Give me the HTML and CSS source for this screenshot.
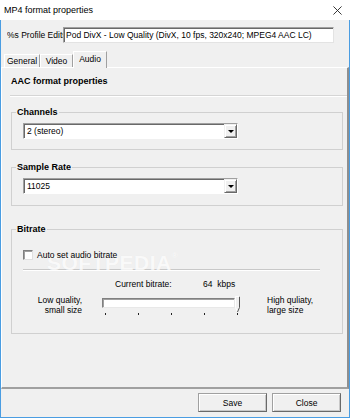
FILE: index.html
```html
<!DOCTYPE html>
<html>
<head>
<meta charset="utf-8">
<link rel="stylesheet" href="styles.css">
</head>
<body>
<div class="window">
  <div class="titlebar">
    <span class="title">MP4 format properties</span>
    <svg class="close" width="10" height="10" viewBox="0 0 10 10"><path d="M0.5 0.5L9.5 9.5M9.5 0.5L0.5 9.5" stroke="#222" stroke-width="1" fill="none"/></svg>
  </div>
  <div class="frame">
    <div class="profile">
      <span class="profile-label">%s Profile Edits</span>
      <div class="edit">Pod DivX - Low Quality (DivX, 10 fps, 320x240; MPEG4 AAC LC)</div>
    </div>
    <div class="tabs">
      <div class="tab tab-general">General</div>
      <div class="tab tab-video">Video</div>
      <div class="tab tab-active">Audio</div>
    </div>
    <div class="panel">
      <div class="heading">AAC format properties</div>
      <div class="rule"></div>

      <fieldset class="group group-channels">
        <legend>Channels</legend>
        <div class="group-body">
          <div class="combo"><span class="combo-text">2 (stereo)</span><span class="drop"><span class="arrow"></span></span></div>
        </div>
      </fieldset>

      <fieldset class="group group-rate">
        <legend>Sample Rate</legend>
        <div class="group-body">
          <div class="combo"><span class="combo-text">11025</span><span class="drop"><span class="arrow"></span></span></div>
        </div>
      </fieldset>

      <fieldset class="group group-bitrate">
        <legend>Bitrate</legend>
        <div class="group-body">
          <div class="watermark">SOFTPEDIA<sup>®</sup></div>
          <div class="check-row"><span class="checkbox"></span><span class="check-label">Auto set audio bitrate</span></div>
          <div class="inner-rule"></div>
          <div class="current-row"><span class="current-label">Current bitrate:</span><span>64&nbsp; kbps</span></div>
          <div class="slider-row">
            <div class="side-label side-left">Low quality,<br>small size</div>
            <div class="slider">
              <div class="track"></div>
              <svg class="thumb" width="7" height="17" viewBox="0 0 7 17"><path d="M1.5 0.5V11.5L3.5 16" stroke="#fff" fill="none"/><path d="M5.5 0.5V11.5L3.5 16" stroke="#555" fill="none"/><path d="M1.5 0.5H5.5" stroke="#fff"/></svg>
              <div class="ticks"><span></span><span></span><span></span><span></span><span></span></div>
            </div>
            <div class="side-label side-right">High quliaty,<br>large size</div>
          </div>
        </div>
      </fieldset>
    </div>
    <div class="footer">
      <button class="btn">Save</button>
      <button class="btn">Close</button>
    </div>
  </div>
</div>
</body>
</html>
```

FILE: styles.css
```css
* { box-sizing: border-box; }
html, body { margin: 0; padding: 0; }
body {
  width: 350px;
  height: 418px;
  background: #f0f0f0;
  font-family: "Liberation Sans", Arial, sans-serif;
  font-size: 8.5px;
  color: #000;
  overflow: hidden;
}
.window {
  width: 350px;
  height: 418px;
  display: flex;
  flex-direction: column;
}
.titlebar {
  height: 20px;
  background: #fff;
  display: flex;
  align-items: center;
  justify-content: space-between;
  padding: 0 8px 0 4px;
}
.title { font-size: 9px; }
.close { display: block; width: 9px; height: 9px; }

.frame {
  flex: 1;
  display: flex;
  flex-direction: column;
  border-left: 1px solid #4a9de2;
  border-right: 1px solid #4a9de2;
  border-bottom: 1px solid #4a9de2;
  min-height: 0;
}

.profile {
  height: 27px;
  display: flex;
  align-items: flex-start;
  padding: 7px 0 0 6px;
}
.profile-label {
  width: 56px;
  overflow: hidden;
  white-space: nowrap;
  line-height: 17px;
}
.edit {
  width: 271px;
  height: 16px;
  background: #fff;
  border: 1px solid;
  border-color: #a0a0a0 #e3e3e3 #e3e3e3 #a0a0a0;
  box-shadow: inset 1px 1px 0 #696969;
  padding-left: 2px;
  line-height: 14px;
  white-space: nowrap;
  overflow: hidden;
}

.tabs {
  height: 20px;
  display: flex;
  align-items: flex-end;
  padding-left: 3px;
}
.tab {
  height: 13px;
  line-height: 13px;
  text-align: center;
  border-top: 1px solid #fff;
  border-left: 1px solid #fff;
  border-right: 1px solid #a0a0a0;
  background: #f0f0f0;
}
.tab-general { width: 36px; }
.tab-video { width: 33px; }
.tab-active {
  width: 34px;
  height: 17px;
  line-height: 15px;
  margin-bottom: -1px;
  position: relative;
  z-index: 1;
}

.panel {
  flex: 1;
  border-top: 1px solid #fff;
  border-left: 1px solid #fff;
  border-right: 2px solid #8f8f8f;
  border-bottom: 2px solid #a0a0a0;
  padding: 7px 0 0 9px;
  min-height: 0;
}
.heading {
  font-weight: bold;
  font-size: 9px;
  line-height: 12px;
  height: 12px;
}
.rule {
  margin: 8px 0 0 -1px;
  height: 2px;
  border-top: 1px solid #d5d5d5;
  border-bottom: 1px solid #fff;
}

.group {
  margin: 9px 4px 0 0;
  padding: 0 0 10px 0;
  border: 1px solid #d0d0d0;
  min-width: 0;
  position: relative;
}
.group legend {
  padding: 0 1px;
  margin-left: 4px;
  font-weight: bold;
  font-size: 9px;
  line-height: 12px;
}
.group-rate { margin-top: 11px; padding-bottom: 11px; }
.group-bitrate { margin-top: 17px; padding-bottom: 18px; }
.group-body { padding-left: 11px; position: relative; }

.combo {
  margin-top: 5px;
  width: 215px;
  height: 16px;
  display: flex;
  background: #fff;
  border: 1px solid;
  border-color: #a0a0a0 #fff #fff #a0a0a0;
  box-shadow: inset 1px 1px 0 #696969;
}
.combo-text {
  flex: 1;
  padding-left: 3px;
  line-height: 14px;
}
.drop {
  width: 13px;
  height: 14px;
  background: #f0f0f0;
  border: 1px solid;
  border-color: #f0f0f0 #696969 #696969 #f0f0f0;
  box-shadow: inset 1px 1px 0 #fff, inset -1px -1px 0 #a0a0a0;
  display: flex;
  align-items: center;
  justify-content: center;
}
.arrow {
  width: 0;
  height: 0;
  border-left: 3px solid transparent;
  border-right: 3px solid transparent;
  border-top: 3px solid #000;
  margin-top: 1px;
}

.check-row {
  margin-top: 14px;
  height: 12px;
  display: flex;
  align-items: center;
  gap: 4px;
  position: relative;
}
.check-label { position: relative; }
.checkbox {
  width: 10px;
  height: 10px;
  background: #fff;
  border: 1px solid;
  border-color: #808080 #e0e0e0 #e0e0e0 #808080;
  box-shadow: inset 1px 1px 0 #a0a0a0;
}
.inner-rule {
  margin-top: 8px;
  width: 297px;
  height: 2px;
  border-top: 1px solid #c8c8c8;
  border-bottom: 1px solid #fff;
}
.current-row {
  margin-top: 7px;
  height: 12px;
  line-height: 12px;
  display: flex;
  padding-left: 92px;
}
.current-label { width: 88px; }

.slider-row {
  margin-top: 5px;
  display: flex;
  align-items: flex-start;
}
.side-label { line-height: 10px; }
.side-left { width: 59px; text-align: right; }
.side-right { margin-left: 25px; }
.slider {
  margin-left: 20px;
  width: 140px;
  height: 20px;
  position: relative;
}
.track {
  margin-top: 3px;
  width: 133px;
  height: 10px;
  background: #fff;
  border: 1px solid;
  border-color: #808080 #e8e8e8 #e8e8e8 #808080;
  box-shadow: inset 1px 1px 0 #a0a0a0;
}
.thumb {
  position: absolute;
  left: 132px;
  top: 1px;
  display: block;
}
.ticks {
  margin-top: 5px;
  display: flex;
  gap: 32px;
  padding-left: 3px;
}
.ticks span {
  width: 1px;
  height: 2px;
  background: #222;
}

.watermark {
  position: absolute;
  left: 35px;
  top: 2px;
  font-size: 21px;
  font-weight: bold;
  letter-spacing: 0.5px;
  line-height: 24px;
  color: rgba(255, 255, 255, 0.8);
  text-shadow: 0 0 1px rgba(0, 0, 0, 0.05);
  pointer-events: none;
}
.watermark sup { font-size: 8px; vertical-align: top; line-height: 10px; }

.footer {
  height: 28px;
  display: flex;
  justify-content: flex-end;
  align-items: flex-start;
  gap: 5px;
  padding: 4px 8px 0 0;
}
.btn {
  width: 69px;
  height: 19px;
  margin: 0;
  padding: 0;
  font-family: "Liberation Sans", Arial, sans-serif;
  font-size: 8.5px;
  color: #000;
  background: #f0f0f0;
  border: 1px solid;
  border-color: #a0a0a0 #696969 #696969 #a0a0a0;
  box-shadow: inset 1px 1px 0 #fff, inset -1px -1px 0 #c8c8c8;
}
```
